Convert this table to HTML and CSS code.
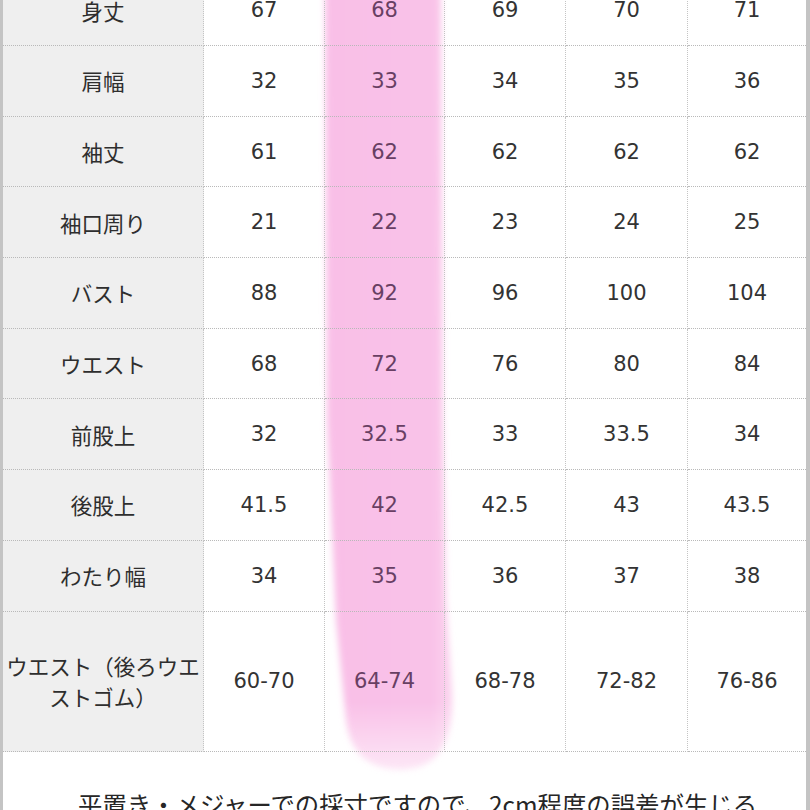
FILE: index.html
```html
<!DOCTYPE html>
<html lang="ja">
<head>
<meta charset="utf-8">
<title>サイズ表</title>
<link rel="stylesheet" href="styles.css">
</head>
<body>
<div class="frame">
  <svg class="marker" width="810" height="810" viewBox="0 0 810 810" aria-hidden="true">
    <defs>
      <filter id="soft" x="-20%" y="-5%" width="140%" height="110%">
        <feGaussianBlur stdDeviation="3"/>
      </filter>
      <linearGradient id="pinkfade" x1="0" x2="1" y1="0" y2="0">
        <stop offset="0" stop-color="#f9bfe7"/>
        <stop offset="0.85" stop-color="#f9c2e8"/>
        <stop offset="1" stop-color="#fbd6ef"/>
      </linearGradient>
      <linearGradient id="tailfade" x1="0" x2="0" y1="0" y2="1">
        <stop offset="0" stop-color="#fff" stop-opacity="1"/>
        <stop offset="0.9" stop-color="#fff" stop-opacity="1"/>
        <stop offset="1" stop-color="#fff" stop-opacity="0.3"/>
      </linearGradient>
      <mask id="tailmask" maskUnits="userSpaceOnUse" x="0" y="0" width="810" height="810">
        <rect x="0" y="0" width="810" height="780" fill="url(#tailfade)"/>
      </mask>
    </defs>
    <g mask="url(#tailmask)">
      <path filter="url(#soft)" fill="url(#pinkfade)"
        d="M 325 -10 L 441 -10 L 443 420 L 446 600 L 452 690 Q 456 768 402 770 Q 352 770 346 720 L 336 620 L 327 420 Z"/>
    </g>
  </svg>
  <div class="sheet">
    <div class="grid">
      <div class="cell head">身丈</div><div class="cell">67</div><div class="cell pick">68</div><div class="cell">69</div><div class="cell">70</div><div class="cell">71</div>
      <div class="cell head">肩幅</div><div class="cell">32</div><div class="cell pick">33</div><div class="cell">34</div><div class="cell">35</div><div class="cell">36</div>
      <div class="cell head">袖丈</div><div class="cell">61</div><div class="cell pick">62</div><div class="cell">62</div><div class="cell">62</div><div class="cell">62</div>
      <div class="cell head">袖口周り</div><div class="cell">21</div><div class="cell pick">22</div><div class="cell">23</div><div class="cell">24</div><div class="cell">25</div>
      <div class="cell head">バスト</div><div class="cell">88</div><div class="cell pick">92</div><div class="cell">96</div><div class="cell">100</div><div class="cell">104</div>
      <div class="cell head">ウエスト</div><div class="cell">68</div><div class="cell pick">72</div><div class="cell">76</div><div class="cell">80</div><div class="cell">84</div>
      <div class="cell head">前股上</div><div class="cell">32</div><div class="cell pick">32.5</div><div class="cell">33</div><div class="cell">33.5</div><div class="cell">34</div>
      <div class="cell head">後股上</div><div class="cell">41.5</div><div class="cell pick">42</div><div class="cell">42.5</div><div class="cell">43</div><div class="cell">43.5</div>
      <div class="cell head">わたり幅</div><div class="cell">34</div><div class="cell pick">35</div><div class="cell">36</div><div class="cell">37</div><div class="cell">38</div>
      <div class="cell head">ウエスト（後ろウエストゴム）</div><div class="cell">60-70</div><div class="cell pick">64-74</div><div class="cell">68-78</div><div class="cell">72-82</div><div class="cell">76-86</div>
    </div>
    <p class="note">平置き・メジャーでの採寸ですので、2cm程度の誤差が生じる</p>
  </div>
</div>
</body>
</html>
```
FILE: styles.css
```css
html, body {
  margin: 0;
  padding: 0;
  background: #ffffff;
}

.frame {
  position: relative;
  width: 810px;
  height: 810px;
  overflow: hidden;
  box-sizing: border-box;
  border-left: 3px solid #c4c4c4;
  border-right: 4px solid #c4c4c4;
  background: #ffffff;
}

.marker {
  position: absolute;
  left: -3px;
  top: 0;
  z-index: 0;
  pointer-events: none;
}

.sheet {
  position: relative;
  z-index: 1;
}

.grid {
  display: grid;
  grid-template-columns: 201px 121px 120px 121px 122px 118px;
  grid-template-rows: repeat(9, 70.7px) 140px;
  margin-top: -24.7px;
}

.cell {
  box-sizing: border-box;
  display: flex;
  align-items: center;
  justify-content: center;
  text-align: center;
  border-bottom: 1px dotted #b9b9b9;
  border-right: 1px dotted #c4c4c4;
  font-family: "DejaVu Sans", "Noto Sans CJK JP", sans-serif;
  font-size: 21px;
  color: #333333;
}

.cell:nth-child(6n) {
  border-right: none;
}

.head {
  background: #efefef;
  font-family: "Noto Sans CJK JP", sans-serif;
  font-size: 21.5px;
  line-height: 31px;
  color: #2e2e2e;
  padding: 0 2px;
}

.pick {
  color: #683f63;
}

.note {
  margin: 0;
  padding: 37px 0 0 75px;
  font-family: "Noto Sans CJK JP", sans-serif;
  font-size: 24.4px;
  line-height: 30px;
  color: #262626;
  white-space: nowrap;
}
```
